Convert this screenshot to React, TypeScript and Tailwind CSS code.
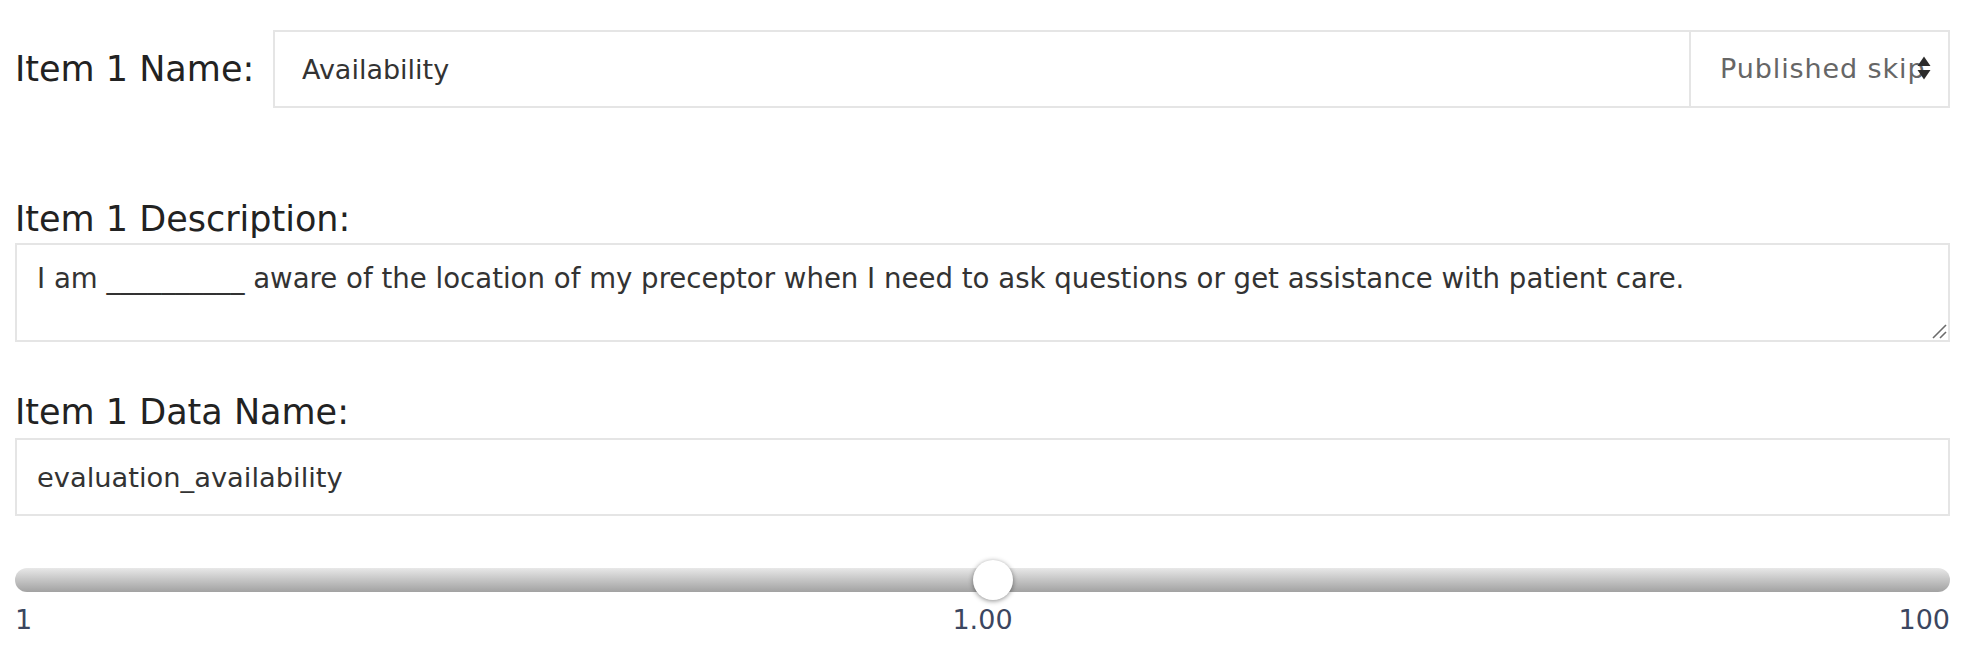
import React from "react";

const font = { fontFamily: '"DejaVu Sans", "Liberation Sans", sans-serif' };

function SortArrows() {
  return (
    <svg width="14" height="24" viewBox="0 0 14 24" className="absolute right-[17px] top-[24px]" aria-hidden="true">
      <path d="M7 0.5 L13.5 10 L0.5 10 Z" fill="#2b2b2b" />
      <path d="M0.5 14 L13.5 14 L7 23.5 Z" fill="#2b2b2b" />
    </svg>
  );
}

function ResizeGrip() {
  return (
    <svg width="16" height="16" viewBox="0 0 16 16" className="pointer-events-none absolute bottom-[3px] right-[3px]" aria-hidden="true">
      <path d="M15 2 L2 15" stroke="#6b6b6b" strokeWidth="1.6" />
      <path d="M15 9 L9 15" stroke="#6b6b6b" strokeWidth="1.6" />
    </svg>
  );
}

export default function App() {
  return (
    <main
      className="min-h-[668px] bg-white pl-[15px] pr-[16px] pt-[30px] font-['DejaVu_Sans',sans-serif]"
      style={font}
    >
      {/* Name row */}
      <div className="flex items-center">
        <label className="w-[258px] shrink-0 text-[35px] leading-[36px] text-[#222]">Item 1 Name:</label>
        <input
          readOnly
          value="Availability"
          className="h-[78px] flex-1 border-2 border-[#e5e5e5] bg-white pl-[27px] text-[27px] text-[#333] outline-none font-['DejaVu_Sans',sans-serif]"
        />
        <div className="relative h-[78px] w-[259px] shrink-0 overflow-hidden border-2 border-l-0 border-[#e5e5e5] pl-[29px] text-[27px] leading-[74px] tracking-[0.9px] text-[#666]">
          <div className="w-[209px] overflow-hidden whitespace-nowrap">Published skip</div>
          <SortArrows />
        </div>
      </div>

      {/* Description */}
      <label className="mt-[93px] block text-[35px] leading-[36px] text-[#222]">Item 1 Description:</label>
      <div className="relative mt-[6px]">
        <textarea
          readOnly
          value="I am __________ aware of the location of my preceptor when I need to ask questions or get assistance with patient care."
          className="block h-[99px] w-full resize-none border-2 border-[#e5e5e5] bg-white px-[20px] pt-[14px] text-[27.6px] leading-[40px] text-[#333] outline-none font-['DejaVu_Sans',sans-serif]"
        />
        <ResizeGrip />
      </div>

      {/* Data name */}
      <label className="mt-[52px] block text-[35px] leading-[36px] text-[#222]">Item 1 Data Name:</label>
      <input
        readOnly
        value="evaluation_availability"
        className="mt-[8px] block h-[78px] w-full border-2 border-[#e5e5e5] bg-white pl-[20px] text-[27.3px] text-[#333] outline-none font-['DejaVu_Sans',sans-serif]"
      />

      {/* Slider */}
      <div className="relative mt-[52px] h-[24px] rounded-full bg-gradient-to-b from-[#e8e8e8] to-[#a2a2a2]">
        <div className="absolute left-[958px] top-1/2 h-[40px] w-[40px] -translate-y-1/2 rounded-full bg-white shadow-[0_1px_5px_rgba(0,0,0,0.45)]" />
      </div>
      <div className="mt-[14px] grid grid-cols-3 text-[27px] leading-[27px] text-[#3b4660]">
        <span className="text-left">1</span>
        <span className="text-center">1.00</span>
        <span className="text-right">100</span>
      </div>
    </main>
  );
}
